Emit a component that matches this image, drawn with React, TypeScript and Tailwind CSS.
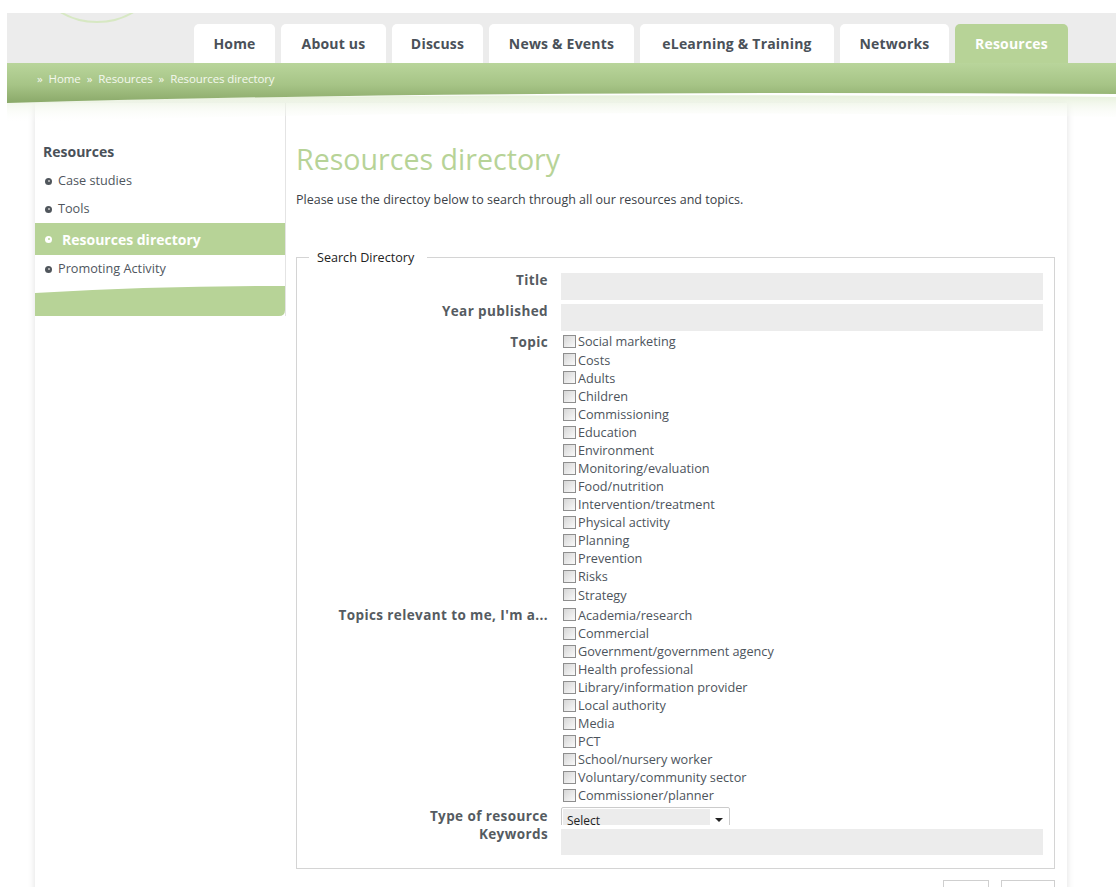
import React from 'react';

const tabs = [
  { label: 'Home', width: 'w-[81px]' },
  { label: 'About us', width: 'w-[105px]' },
  { label: 'Discuss', width: 'w-[91px]' },
  { label: 'News & Events', width: 'w-[145px]' },
  { label: 'eLearning & Training', width: 'w-[194px]' },
  { label: 'Networks', width: 'w-[109px]' },
  { label: 'Resources', width: 'w-[113px]', active: true },
];

const sideLinks = [
  { label: 'Case studies' },
  { label: 'Tools' },
  { label: 'Resources directory', active: true },
  { label: 'Promoting Activity' },
];

const topics = [
  'Social marketing',
  'Costs',
  'Adults',
  'Children',
  'Commissioning',
  'Education',
  'Environment',
  'Monitoring/evaluation',
  'Food/nutrition',
  'Intervention/treatment',
  'Physical activity',
  'Planning',
  'Prevention',
  'Risks',
  'Strategy',
];

const audiences = [
  'Academia/research',
  'Commercial',
  'Government/government agency',
  'Health professional',
  'Library/information provider',
  'Local authority',
  'Media',
  'PCT',
  'School/nursery worker',
  'Voluntary/community sector',
  'Commissioner/planner',
];

function Bullet({ light }: { light?: boolean }) {
  return (
    <span
      className={`inline-flex items-center justify-center w-[7px] h-[7px] rounded-full ${
        light ? 'bg-white' : 'bg-[#50565c]'
      }`}
    >
      <span className={`w-[2px] h-[2px] rounded-full ${light ? 'bg-[#b7d397]' : 'bg-[#c8c8c8]'}`} />
    </span>
  );
}

function CheckRow({ label }: { label: string }) {
  return (
    <label className="flex items-center h-[18.08px] pl-[2px] text-[12.7px] text-[#4d545c] leading-none">
      <span className="w-[13px] h-[13px] mr-[2px] border border-[#8e8e8e] bg-gradient-to-br from-[#d6d6d6] to-[#fafafa] shrink-0" />
      {label}
    </label>
  );
}

function FieldLabel({ children, className = '' }: { children: React.ReactNode; className?: string }) {
  return (
    <div className={`text-right font-bold text-[13.5px] tracking-[0.4px] text-[#555b61] ${className}`}>
      {children}
    </div>
  );
}

export default function App() {
  return (
    <div className="min-h-screen bg-white font-['Open_Sans',sans-serif] overflow-hidden">
      {/* grey header band with the menu tabs */}
      <header className="relative ml-[7px] mt-[13px] h-[50px] bg-[#ececec] overflow-hidden">
        <svg className="absolute left-0 top-0" width="200" height="50" viewBox="0 0 200 50">
          <circle cx="90" cy="-62" r="71" fill="none" stroke="#d7e8c3" strokeWidth="2" />
        </svg>
        <nav className="flex items-end h-full pl-[187px] gap-[6px]">
          {tabs.map(tab => (
            <div
              key={tab.label}
              className={`${tab.width} h-[39px] rounded-t-[5px] flex items-center justify-center text-[14px] tracking-[0.2px] font-bold ${
                tab.active ? 'bg-[#b7d397] text-white' : 'bg-white text-[#4a5159]'
              }`}
            >
              {tab.label}
            </div>
          ))}
        </nav>
      </header>

      {/* breadcrumb bar */}
      <div className="relative ml-[7px] h-[40px] z-10">
        <svg
          className="absolute left-0 top-0 w-full h-[62px] pointer-events-none"
          viewBox="0 0 1109 62"
          preserveAspectRatio="none"
        >
          <defs>
            <linearGradient id="barFill" x1="0" y1="0" x2="0" y2="1">
              <stop offset="0" stopColor="#b9d59b" />
              <stop offset="0.55" stopColor="#a6c486" />
              <stop offset="1" stopColor="#8aa969" />
            </linearGradient>
            <linearGradient id="barHaze" x1="0" y1="0" x2="0" y2="1">
              <stop offset="0" stopColor="#e6f0da" />
              <stop offset="1" stopColor="#ffffff" stopOpacity="0" />
            </linearGradient>
          </defs>
          <path d="M0 38 Q 450 29 1109 34 L1109 54 Q 450 44 0 60 Z" fill="url(#barHaze)" />
          <path d="M0 0 L1109 0 L1109 31 Q 450 27 0 40 Z" fill="url(#barFill)" />
        </svg>
        <div className="relative pl-[30px] pt-[7px] text-[11.5px] text-[#f4f8ee] tracking-[-0.1px]">
          <span className="mr-[6px]">»</span>Home<span className="mx-[6px]">»</span>Resources
          <span className="mx-[6px]">»</span>Resources directory
        </div>
      </div>

      {/* page body */}
      <div className="pl-[35px] pr-[49px]">
        <div className="flex items-start bg-white shadow-[0_0_7px_rgba(0,0,0,0.13)] min-h-[800px]">
          <aside className="w-[251px] shrink-0 border-r border-[#e4e4e4] pt-[40px]">
            <h3 className="pl-[8px] text-[14px] font-bold text-[#4a5159] leading-[18px]">Resources</h3>
            <ul className="mt-[6px]">
              {sideLinks.map(link =>
                link.active ? (
                  <li
                    key={link.label}
                    className="flex items-center h-[32px] pl-[10px] gap-[10px] bg-[#b7d397] text-white font-bold text-[14px]"
                  >
                    <Bullet light />
                    {link.label}
                  </li>
                ) : (
                  <li
                    key={link.label}
                    className="flex items-center h-[28px] pl-[10px] gap-[6px] text-[12.7px] text-[#4f565e]"
                  >
                    <Bullet />
                    {link.label}
                  </li>
                )
              )}
            </ul>
            <svg className="block mt-[3px]" width="250" height="30" viewBox="0 0 250 30">
              <path d="M0 7 Q 120 0 250 0 L250 24 Q 250 30 244 30 L0 30 Z" fill="#b7d397" />
            </svg>
          </aside>

          <main className="flex-1 pl-[10px] pr-[12px] pt-[38px]">
            <h1 className="text-[28.6px] leading-[36px] text-[#b7d397]">Resources directory</h1>
            <p className="mt-[14px] text-[12.5px] text-[#3c4248]">
              Please use the directoy below to search through all our resources and topics.
            </p>

            <fieldset className="mt-[40px] border border-[#d4d4d4] pl-[12px] pr-[11px] pb-[13px]">
              <legend className="pl-[8px] pr-[13px] text-[12.6px] text-[#222] leading-[16px]">Search Directory</legend>
              <div className="grid grid-cols-[239px_1fr] gap-x-[13px] pt-[7px]">
                <FieldLabel className="leading-[14px]">Title</FieldLabel>
                <div className="h-[27px] bg-[#ececec]" />

                <FieldLabel className="leading-[14px] mt-[4px]">Year published</FieldLabel>
                <div className="h-[27px] bg-[#ececec] mt-[4px]" />

                <FieldLabel className="leading-[18px] mt-[2px]">Topic</FieldLabel>
                <div className="mt-[2px]">
                  {topics.map(t => (
                    <CheckRow key={t} label={t} />
                  ))}
                </div>

                <FieldLabel className="leading-[18px] mt-[2px]">Topics relevant to me, I'm a...</FieldLabel>
                <div className="mt-[2px]">
                  {audiences.map(a => (
                    <CheckRow key={a} label={a} />
                  ))}
                </div>

                <FieldLabel className="leading-[18px] mt-[2px]">Type of resource</FieldLabel>
                <div className="mt-[2px] h-[18px] overflow-hidden">
                  <div className="w-[169px] h-[26px] border border-[#cbcbcb] rounded-[2px] flex items-start p-[1px]">
                    <div className="w-[147px] h-[22px] bg-[#ececec] pl-[4px] pt-[4px] text-[12px] leading-[16px] text-[#222]">
                      Select
                    </div>
                    <div className="flex-1 flex justify-center pt-[9px]">
                      <span className="w-0 h-0 border-l-[4px] border-r-[4px] border-t-[4px] border-l-transparent border-r-transparent border-t-[#222]" />
                    </div>
                  </div>
                </div>

                <FieldLabel className="leading-[18px]">Keywords</FieldLabel>
                <div className="h-[26px] mt-[4px] bg-[#ececec]" />
              </div>
            </fieldset>

            <div className="flex justify-end gap-[12px] mt-[11px]">
              <button className="w-[46px] h-[24px] border border-[#cfcfcf] bg-white" />
              <button className="w-[54px] h-[24px] border border-[#cfcfcf] bg-white" />
            </div>
          </main>
        </div>
      </div>
    </div>
  );
}
